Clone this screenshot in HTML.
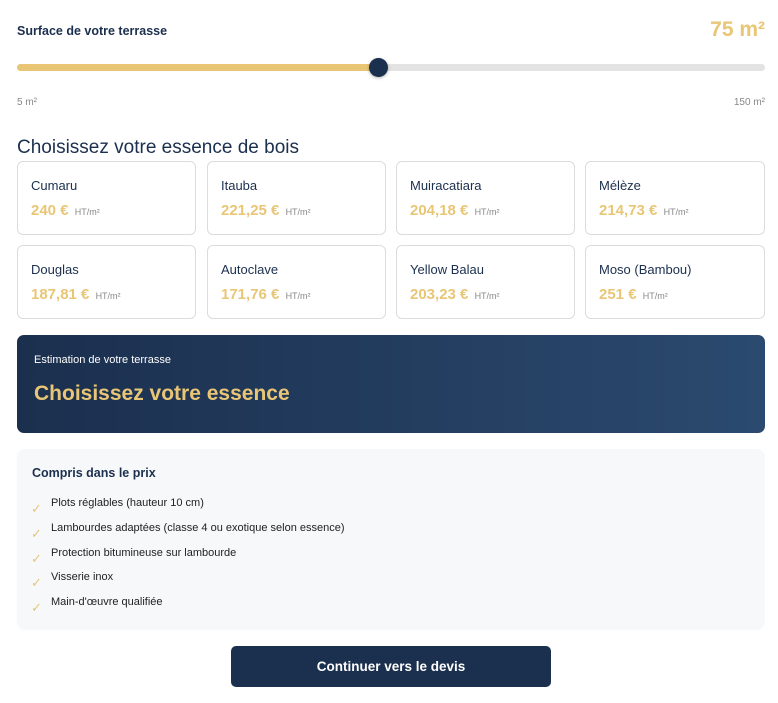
<!DOCTYPE html><html><head><meta charset="utf-8"><style>
*{box-sizing:border-box;margin:0;padding:0}
body{width:778px;height:703px;background:#fff;font-family:"Liberation Sans",sans-serif;color:#1b2f4e;position:relative;overflow:hidden}
.a{position:absolute}
.card{position:absolute;width:179px;height:74px;border:1px solid #dcdcdc;border-radius:6px;background:#fff}
.card .n{position:absolute;left:13px;top:16px;font-size:13px;color:#1b2f4e}
.card .p{position:absolute;left:13px;top:40px;font-size:15px;font-weight:bold;color:#e9c675;white-space:nowrap}
.card .p span{font-size:9px;font-weight:normal;color:#888;margin-left:2px}
li{list-style:none;position:absolute;left:51px;font-size:11px;color:#222}
li:before{content:"✓";position:absolute;left:-20px;top:4px;color:#e9c675;font-size:13px}
</style></head><body>
<div class="a" style="left:17px;top:24px;font-size:12.5px;font-weight:bold">Surface de votre terrasse</div>
<div class="a" style="right:13px;top:18px;font-size:21px;font-weight:bold;color:#e9c675">75 m²</div>
<div class="a" style="left:17px;top:64px;width:748px;height:7px;border-radius:4px;background:#e3e3e3"></div>
<div class="a" style="left:17px;top:64px;width:362px;height:7px;border-radius:4px;background:#e9c675"></div>
<div class="a" style="left:369px;top:58px;width:19px;height:19px;border-radius:50%;background:#1b2f4e;box-shadow:0 1px 3px rgba(0,0,0,.3)"></div>
<div class="a" style="left:17px;top:97px;font-size:10px;color:#888">5 m²</div>
<div class="a" style="right:13px;top:97px;font-size:10px;color:#888">150 m²</div>
<div class="a" style="left:17px;top:137px;font-size:19px;color:#1b2f4e">Choisissez votre essence de bois</div>
<div class="card" style="left:17px;top:161px"><div class="n">Cumaru</div><div class="p">240 € <span>HT/m²</span></div></div>
<div class="card" style="left:207px;top:161px"><div class="n">Itauba</div><div class="p">221,25 € <span>HT/m²</span></div></div>
<div class="card" style="left:396px;top:161px"><div class="n">Muiracatiara</div><div class="p">204,18 € <span>HT/m²</span></div></div>
<div class="card" style="left:585px;top:161px;width:180px"><div class="n">Mélèze</div><div class="p">214,73 € <span>HT/m²</span></div></div>
<div class="card" style="left:17px;top:245px"><div class="n">Douglas</div><div class="p">187,81 € <span>HT/m²</span></div></div>
<div class="card" style="left:207px;top:245px"><div class="n">Autoclave</div><div class="p">171,76 € <span>HT/m²</span></div></div>
<div class="card" style="left:396px;top:245px"><div class="n">Yellow Balau</div><div class="p">203,23 € <span>HT/m²</span></div></div>
<div class="card" style="left:585px;top:245px;width:180px"><div class="n">Moso (Bambou)</div><div class="p">251 € <span>HT/m²</span></div></div>
<div class="a" style="left:17px;top:335px;width:748px;height:98px;border-radius:7px;background:linear-gradient(90deg,#1b2f4e,#2b4a6f)">
<div class="a" style="left:17px;top:19px;font-size:11px;color:#fff">Estimation de votre terrasse</div>
<div class="a" style="left:17px;top:47px;font-size:21px;font-weight:bold;color:#e9c675">Choisissez votre essence</div></div>
<div class="a" style="left:17px;top:449px;width:748px;height:181px;border-radius:8px;background:#f7f8fa"></div>
<div class="a" style="left:32px;top:466px;font-size:12.5px;font-weight:bold">Compris dans le prix</div>
<ul><li style="top:497px">Plots réglables (hauteur 10 cm)</li>
<li style="top:522px">Lambourdes adaptées (classe 4 ou exotique selon essence)</li>
<li style="top:547px">Protection bitumineuse sur lambourde</li>
<li style="top:571px">Visserie inox</li>
<li style="top:596px">Main-d'œuvre qualifiée</li></ul>
<div class="a" style="left:231px;top:646px;width:320px;height:41px;border-radius:5px;background:#1b2f4e;color:#fff;font-size:13.5px;font-weight:bold;text-align:center;line-height:41px">Continuer vers le devis</div>
</body></html>
